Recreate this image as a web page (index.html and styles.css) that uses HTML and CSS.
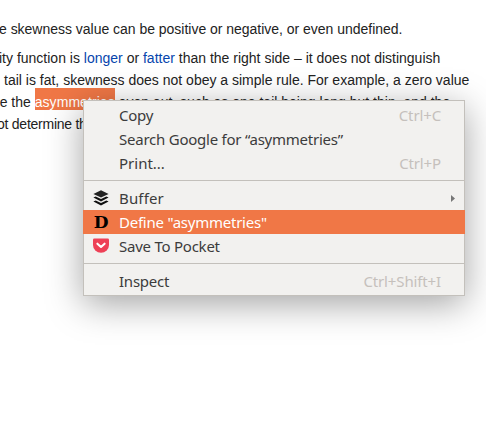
FILE: index.html
```html
<!DOCTYPE html>
<html lang="en">
<head>
<meta charset="utf-8">
<title>Skewness</title>
<link rel="stylesheet" href="styles.css">
</head>
<body>
<main class="article">
  <p class="intro">e skewness value can be positive or negative, or even undefined.</p>
  <p class="detail">
    <span class="line">ity function is <a>longer</a> or <a>fatter</a> than the right side – it does not distinguish</span>
    <span class="line indent">tail is fat, skewness does not obey a simple rule. For example, a zero value</span>
    <span class="line">re the <mark>asymmetries</mark> even out, such as one tail being long but thin, and the</span>
    <span class="line">ot determine th</span>
  </p>
</main>
<div class="menu">
  <div class="item"><span class="label copy">Copy</span><span class="key">Ctrl+C</span></div>
  <div class="item"><span class="label search">Search Google for “asymmetries”</span></div>
  <div class="item"><span class="label print">Print...</span><span class="key">Ctrl+P</span></div>
  <hr>
  <div class="item">
    <svg class="icon" viewBox="0 0 16 16"><path fill="#222" d="M8 .3 15.600 3.900 8 7.600.4 3.900z"/><path fill="#111" d="M.4 7.500l2.300-1.100L8 9l5.300-2.600 2.300 1.100L8 11.500zM.4 11.600l2.300-1.100L8 13.100l5.300-2.600 2.300 1.100L8 15.600z"/></svg>
    <span class="label buffer">Buffer</span>
    <svg class="arrow" viewBox="0 0 4 7"><path fill="#777" d="M0 0 4 3.500 0 7z"/></svg>
  </div>
  <div class="item active"><span class="icon letter">D</span><span class="label define">Define "asymmetries"</span></div>
  <div class="item">
    <svg class="icon" viewBox="0 0 16 16"><path fill="#ee4056" d="M1.300.5h13.400Q16 .5 16 1.800V7a8 7.800 0 0 1-16 0V1.800Q0 .5 1.300.5z"/><path fill="none" stroke="#fff" stroke-width="2.100" stroke-linecap="round" stroke-linejoin="round" d="M4.400 5.700 8 9l3.600-3.300"/></svg>
    <span class="label save">Save To Pocket</span>
  </div>
  <hr>
  <div class="item"><span class="label inspect">Inspect</span><span class="key">Ctrl+Shift+I</span></div>
</div>
</body>
</html>
```
FILE: styles.css
```css
body {
  margin: 0;
  width: 486px;
  height: 434px;
  overflow: hidden;
  background: #fff;
  color: #222;
  font: 14px/22px "Liberation Sans", Arial, sans-serif;
}
.article { padding-top: 18px; white-space: nowrap; }
p { margin: 0; }
.intro { margin: 0 0 7px -1px; letter-spacing: -.02px; }
.line { display: block; margin-left: -1px; }
.line.indent { margin-left: 4px; }
.line:nth-child(3) { margin-left: -5px; }
.line:nth-child(4) { margin-left: -3px; letter-spacing: -.25px; }
a { color: #0645ad; }
mark {
  padding-top: 6px;
  background: #f07746;
  color: #fff;
  letter-spacing: .06px;
}
.menu {
  position: absolute;
  left: 83px;
  top: 100px;
  box-sizing: border-box;
  width: 382px;
  height: 196px;
  padding: 2px 0;
  border: 1px solid #c3c0bb;
  background: #f2f1ef;
  box-shadow: 0 8px 34px rgba(0, 0, 0, .36);
  color: #3c3c3c;
  font: 15px/24px "Noto Sans", "Open Sans", sans-serif;
  white-space: nowrap;
}
.item {
  display: grid;
  grid-template-columns: 16px 1fr auto;
  column-gap: 10px;
  align-items: center;
  height: 24px;
  padding: 0 23px 0 9px;
}
.label { grid-column: 2; letter-spacing: -.24px; }
.label.buffer { letter-spacing: .15px; }
.label.print { letter-spacing: 0; }
.icon { grid-column: 1; width: 16px; height: 16px; }
.key { color: #c5c0bc; letter-spacing: -.13px; }
.arrow { width: 4px; height: 7px; margin: 0 -14px 0 10px; }
.active { margin: 0 -1px; padding: 0 24px 0 10px; background: #f07746; color: #fff; }
.letter { color: #000; font: bold 17px/16px "DejaVu Serif", serif; text-align: center; }
hr { height: 1px; margin: 5px 0; border: 0; background: #c3c0bb; }
```
